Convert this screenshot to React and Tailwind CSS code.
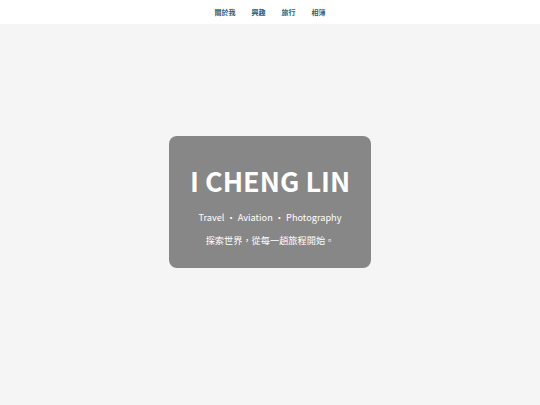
export default function App() {
  const links = ['關於我', '興趣', '旅行', '相簿'];
  return (
    <div className="relative min-h-screen bg-[#f5f5f5] font-['Noto_Sans_CJK_TC','Noto_Sans',sans-serif]">
      <nav className="absolute inset-x-0 top-0 h-6 bg-white flex items-center justify-center gap-4">
        {links.map((l) => (
          <a key={l} className="text-[7px] font-bold text-[#2a5f78] leading-none">
            {l}
          </a>
        ))}
      </nav>
      <main className="min-h-screen flex items-center justify-center">
        <div className="w-[202px] h-[132px] mb-[1px] pt-[8px] rounded-lg bg-[#878787] flex flex-col items-center justify-center text-white">
          <h1 className="text-[27px] font-bold leading-none">I CHENG LIN</h1>
          <p className="mt-[19px] text-[9.2px] leading-none">Travel ・ Aviation ・ Photography</p>
          <p className="mt-[13px] text-[9.2px] leading-none">探索世界，從每一趟旅程開始。</p>
        </div>
      </main>
    </div>
  );
}
